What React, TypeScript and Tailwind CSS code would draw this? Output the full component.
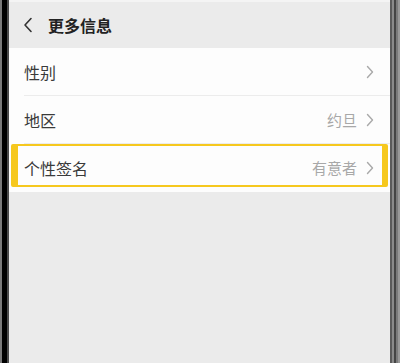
import React from 'react';

const font = { fontFamily: '"Noto Sans CJK SC", "Noto Sans", sans-serif' };

function Chevron() {
  return (
    <svg width="8" height="14" viewBox="0 0 8 14" className="ml-[9px] shrink-0">
      <path d="M1.5 1.5 L6.5 7 L1.5 12.5" fill="none" stroke="#a9a9a9" strokeWidth="1.4" strokeLinecap="round" strokeLinejoin="round" />
    </svg>
  );
}

function Row({ label, value, divider }: { label: string; value?: string; divider?: boolean }) {
  return (
    <div className="relative flex h-[48px] items-center pl-[15px] pr-[16px]">
      <span className="flex-1 text-[16px] text-[#3a3a3a]">{label}</span>
      {value && <span className="text-[15px] text-[#a8a8a8]">{value}</span>}
      <Chevron />
      {divider && <div className="absolute bottom-0 left-[15px] right-0 h-px bg-[#ececec]" />}
    </div>
  );
}

export default function App() {
  return (
    <div className="flex h-[363px] w-[400px] bg-[#ebebeb]" style={font}>
      <div className="flex w-[9px] shrink-0">
        <div className="w-[2px] bg-[#7a7a7a]" />
        <div className="w-[5px] bg-black" />
        <div className="w-[2px] bg-[#4a4a4a]" />
      </div>

      <div className="flex flex-1 flex-col">
        <div className="h-[2px] bg-[#f4f4f4]" />
        <div className="flex h-[46px] items-center bg-[#ebebeb]">
          <svg width="10" height="16" viewBox="0 0 10 16" className="ml-[14px]">
            <path d="M8 1.5 L2 8 L8 14.5" fill="none" stroke="#333" strokeWidth="1.6" strokeLinecap="round" strokeLinejoin="round" />
          </svg>
          <span className="ml-[15px] text-[16px] font-bold text-[#222]">更多信息</span>
        </div>

        <div className="relative bg-[#fdfdfd]">
          <Row label="性别" divider />
          <Row label="地区" value="约旦" divider />
          <Row label="个性签名" value="有意者" />
          <div className="absolute bottom-[5px] left-[2px] right-[2px] h-[43px] rounded-[2px] border-y-2 border-l-[7px] border-r-[6px] border-[#f6c81e]" />
        </div>
      </div>

      <div className="flex w-[10px] shrink-0">
        <div className="w-[2px] bg-[#5a5a5a]" />
        <div className="w-[2px] bg-[#8a8a8a]" />
        <div className="w-[2px] bg-[#444]" />
        <div className="w-[2px] bg-[#7a7a7a]" />
        <div className="w-[2px] bg-[#999]" />
      </div>
    </div>
  );
}
